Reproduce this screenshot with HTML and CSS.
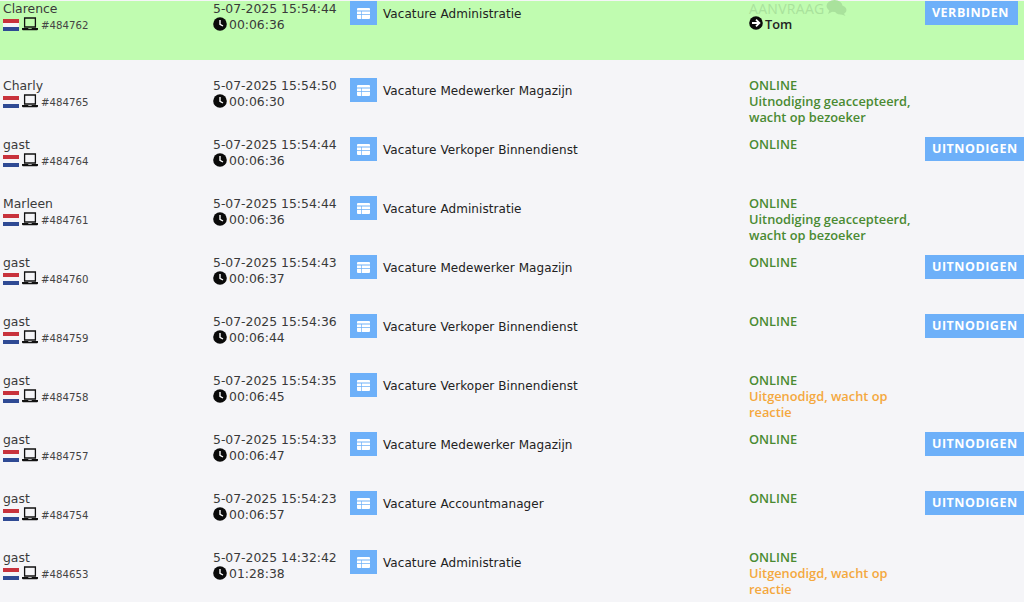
FILE: index.html
```html
<!DOCTYPE html>
<html lang="nl">
<head>
<meta charset="utf-8">
<title>Bezoekers</title>
<link rel="stylesheet" href="styles.css">
</head>
<body>
<svg class="defs" width="0" height="0" aria-hidden="true">
  <symbol id="flag" viewBox="0 0 16 12"><rect width="16" height="4" fill="#c8323c"/><rect y="4" width="16" height="4" fill="#f5f5f8"/><rect y="8" width="16" height="4" fill="#2f4a94"/></symbol>
  <symbol id="laptop" viewBox="0 0 16 14"><path d="M2.6 1h10.8v9H2.6z" fill="none" stroke="#111" stroke-width="1.3"/><path d="M0 11h6l.6.7h2.8l.6-.7h6v1.2a1 1 0 0 1-1 1H1a1 1 0 0 1-1-1z" fill="#111"/></symbol>
  <symbol id="clock" viewBox="0 0 14 14"><circle cx="7" cy="7" r="6.8" fill="#0a0a0a"/><path d="M7 3v4.3l3 1.7" fill="none" stroke="#fff" stroke-width="1.4"/></symbol>
  <symbol id="table" viewBox="0 0 13 11"><path fill="#fff" d="M0 1a1 1 0 0 1 1-1h11a1 1 0 0 1 1 1v1.6H0zM0 3.4h4v2.8H0zM4.7 3.4H13v2.8H4.7zM0 7h4v4H1a1 1 0 0 1-1-1zM4.7 7H13v3a1 1 0 0 1-1 1H4.7z"/></symbol>
  <symbol id="arrow" viewBox="0 0 14 14"><circle cx="7" cy="7" r="6.8" fill="#0a0a0a"/><path d="M3 7h7M7 3.6 10.4 7 7 10.4" fill="none" stroke="#fff" stroke-width="1.8"/></symbol>
  <symbol id="chat" viewBox="0 0 20 16"><ellipse cx="8" cy="6" rx="8" ry="6" fill="#a9e29c"/><path d="M3 10 1.5 14 7 11z" fill="#a9e29c"/><ellipse cx="14" cy="10" rx="6" ry="4.6" fill="#a9e29c"/><path d="M17 13l2 3-5-2z" fill="#a9e29c"/></symbol>
</svg>
<main class="list">
  <div class="row row-active">
    <div class="who"><div>Clarence</div><div class="meta"><svg class="flag"><use href="#flag"/></svg><svg class="laptop"><use href="#laptop"/></svg><span class="id">#484762</span></div></div>
    <div class="when"><div>5-07-2025 15:54:44</div><div class="dur"><svg class="ico"><use href="#clock"/></svg>00:06:36</div></div>
    <div class="tile"><svg class="tbl"><use href="#table"/></svg></div>
    <div class="job">Vacature Administratie</div>
    <div class="state"><div class="ask">AANVRAAG<svg class="chat"><use href="#chat"/></svg></div><div class="agent"><svg class="ico"><use href="#arrow"/></svg>Tom</div></div>
    <div class="btn short">VERBINDEN</div>
  </div>
  <div class="row">
    <div class="who"><div>Charly</div><div class="meta"><svg class="flag"><use href="#flag"/></svg><svg class="laptop"><use href="#laptop"/></svg><span class="id">#484765</span></div></div>
    <div class="when"><div>5-07-2025 15:54:50</div><div class="dur"><svg class="ico"><use href="#clock"/></svg>00:06:30</div></div>
    <div class="tile"><svg class="tbl"><use href="#table"/></svg></div>
    <div class="job">Vacature Medewerker Magazijn</div>
    <div class="state"><div>ONLINE</div><div>Uitnodiging geaccepteerd,<br>wacht op bezoeker</div></div>
  </div>
  <div class="row">
    <div class="who"><div>gast</div><div class="meta"><svg class="flag"><use href="#flag"/></svg><svg class="laptop"><use href="#laptop"/></svg><span class="id">#484764</span></div></div>
    <div class="when"><div>5-07-2025 15:54:44</div><div class="dur"><svg class="ico"><use href="#clock"/></svg>00:06:36</div></div>
    <div class="tile"><svg class="tbl"><use href="#table"/></svg></div>
    <div class="job">Vacature Verkoper Binnendienst</div>
    <div class="state"><div>ONLINE</div></div>
    <div class="btn">UITNODIGEN</div>
  </div>
  <div class="row">
    <div class="who"><div>Marleen</div><div class="meta"><svg class="flag"><use href="#flag"/></svg><svg class="laptop"><use href="#laptop"/></svg><span class="id">#484761</span></div></div>
    <div class="when"><div>5-07-2025 15:54:44</div><div class="dur"><svg class="ico"><use href="#clock"/></svg>00:06:36</div></div>
    <div class="tile"><svg class="tbl"><use href="#table"/></svg></div>
    <div class="job">Vacature Administratie</div>
    <div class="state"><div>ONLINE</div><div>Uitnodiging geaccepteerd,<br>wacht op bezoeker</div></div>
  </div>
  <div class="row">
    <div class="who"><div>gast</div><div class="meta"><svg class="flag"><use href="#flag"/></svg><svg class="laptop"><use href="#laptop"/></svg><span class="id">#484760</span></div></div>
    <div class="when"><div>5-07-2025 15:54:43</div><div class="dur"><svg class="ico"><use href="#clock"/></svg>00:06:37</div></div>
    <div class="tile"><svg class="tbl"><use href="#table"/></svg></div>
    <div class="job">Vacature Medewerker Magazijn</div>
    <div class="state"><div>ONLINE</div></div>
    <div class="btn">UITNODIGEN</div>
  </div>
  <div class="row">
    <div class="who"><div>gast</div><div class="meta"><svg class="flag"><use href="#flag"/></svg><svg class="laptop"><use href="#laptop"/></svg><span class="id">#484759</span></div></div>
    <div class="when"><div>5-07-2025 15:54:36</div><div class="dur"><svg class="ico"><use href="#clock"/></svg>00:06:44</div></div>
    <div class="tile"><svg class="tbl"><use href="#table"/></svg></div>
    <div class="job">Vacature Verkoper Binnendienst</div>
    <div class="state"><div>ONLINE</div></div>
    <div class="btn">UITNODIGEN</div>
  </div>
  <div class="row">
    <div class="who"><div>gast</div><div class="meta"><svg class="flag"><use href="#flag"/></svg><svg class="laptop"><use href="#laptop"/></svg><span class="id">#484758</span></div></div>
    <div class="when"><div>5-07-2025 15:54:35</div><div class="dur"><svg class="ico"><use href="#clock"/></svg>00:06:45</div></div>
    <div class="tile"><svg class="tbl"><use href="#table"/></svg></div>
    <div class="job">Vacature Verkoper Binnendienst</div>
    <div class="state"><div>ONLINE</div><div class="wait">Uitgenodigd, wacht op<br>reactie</div></div>
  </div>
  <div class="row">
    <div class="who"><div>gast</div><div class="meta"><svg class="flag"><use href="#flag"/></svg><svg class="laptop"><use href="#laptop"/></svg><span class="id">#484757</span></div></div>
    <div class="when"><div>5-07-2025 15:54:33</div><div class="dur"><svg class="ico"><use href="#clock"/></svg>00:06:47</div></div>
    <div class="tile"><svg class="tbl"><use href="#table"/></svg></div>
    <div class="job">Vacature Medewerker Magazijn</div>
    <div class="state"><div>ONLINE</div></div>
    <div class="btn">UITNODIGEN</div>
  </div>
  <div class="row">
    <div class="who"><div>gast</div><div class="meta"><svg class="flag"><use href="#flag"/></svg><svg class="laptop"><use href="#laptop"/></svg><span class="id">#484754</span></div></div>
    <div class="when"><div>5-07-2025 15:54:23</div><div class="dur"><svg class="ico"><use href="#clock"/></svg>00:06:57</div></div>
    <div class="tile"><svg class="tbl"><use href="#table"/></svg></div>
    <div class="job">Vacature Accountmanager</div>
    <div class="state"><div>ONLINE</div></div>
    <div class="btn">UITNODIGEN</div>
  </div>
  <div class="row">
    <div class="who"><div>gast</div><div class="meta"><svg class="flag"><use href="#flag"/></svg><svg class="laptop"><use href="#laptop"/></svg><span class="id">#484653</span></div></div>
    <div class="when"><div>5-07-2025 14:32:42</div><div class="dur"><svg class="ico"><use href="#clock"/></svg>01:28:38</div></div>
    <div class="tile"><svg class="tbl"><use href="#table"/></svg></div>
    <div class="job">Vacature Administratie</div>
    <div class="state"><div>ONLINE</div><div class="wait">Uitgenodigd, wacht op<br>reactie</div></div>
  </div>
</main>
</body>
</html>
```
FILE: styles.css
```css
html, body {
  margin: 0;
  height: 602px;
  overflow: hidden;
  background: #f5f5f8;
}
body {
  padding-top: 1px;
  box-sizing: border-box;
  font-family: "DejaVu Sans", Verdana, sans-serif;
  font-size: 12.4px;
  line-height: 16px;
  color: #3a3a3a;
}
.defs { display: block; height: 0; }
.list { display: flex; flex-direction: column; }
.row {
  display: grid;
  grid-template-columns: 213px 137px 27px 372px 176px 99px;
  height: 41px;
  margin-bottom: 18px;
}
.row-active {
  background: #c0fcb0;
  height: 59px;
  margin-bottom: 18px;
}
.who { padding-left: 3px; }
.meta { display: flex; align-items: center; height: 16px; }
.flag { width: 16px; height: 12px; margin: 0 3px 0 0; }
.laptop { width: 16px; height: 14px; margin-right: 3px; margin-top: -2px; }
.id { font-size: 10.2px; color: #444; padding-top: 1px; }
.dur { display: flex; align-items: center; }
.ico { width: 14px; height: 14px; margin: -2px 2px 0 0; }
.tile {
  width: 27px;
  height: 24px;
  background: #6db0f9;
  display: flex;
  align-items: center;
  justify-content: center;
}
.tbl { width: 13px; height: 11px; }
.job {
  padding: 5px 0 0 6px;
  font-size: 12px;
  letter-spacing: 0.07px;
  color: #222;
}
.state {
  font-family: "Open Sans", sans-serif;
  font-weight: 600;
  font-size: 12.8px;
  color: #4a8a32;
  margin-top: -1px;
}
.wait { color: #f4a83e; }
.ask {
  display: flex;
  align-items: center;
  font-size: 14px;
  line-height: 14px;
  font-weight: 400;
  letter-spacing: 0.3px;
  padding-top: 2px;
  height: 14px;
  color: #a9e29c;
}
.chat { width: 21px; height: 16px; margin-top: -3px; margin-left: 1px; }
.agent { display: flex; align-items: center; color: #222; }
.btn {
  width: 99px;
  height: 24px;
  box-sizing: border-box;
  padding-left: 7px;
  background: #6db0f9;
  color: #fff;
  font-family: "Open Sans", sans-serif;
  font-weight: 700;
  font-size: 12.5px;
  letter-spacing: 0.5px;
  line-height: 24px;
}
.btn.short { width: 93px; }
```
